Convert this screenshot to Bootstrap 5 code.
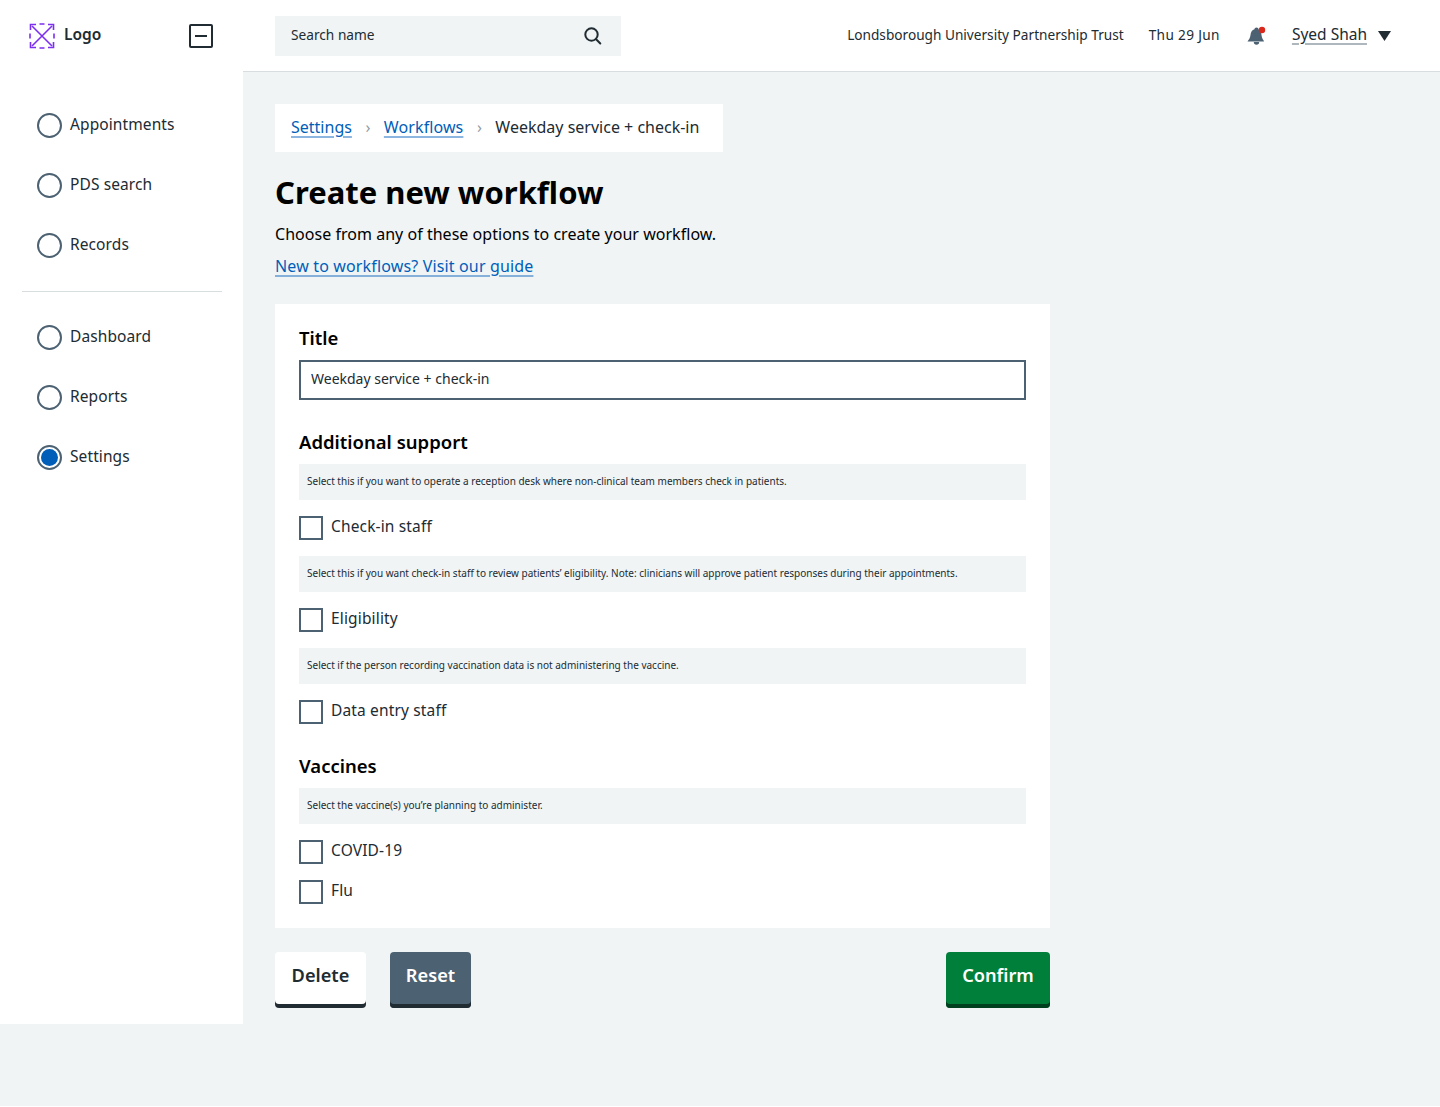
<!DOCTYPE html>
<html lang="en">
    <head>
        <meta charset="UTF-8">
        <meta name="viewport" content="width=device-width, initial-scale=1.0">
        <title>Create new workflow</title>
        <link href="https://cdn.jsdelivr.net/npm/bootstrap@5.3.0/dist/css/bootstrap.min.css" rel="stylesheet">
        <style>
            html { background: #fff; }
            body { font-family: "Noto Sans", "Open Sans", sans-serif; color: #212b32; background: #f0f4f5; min-height: 1106px; font-size: 16px; }
            a { color: #005eb8; text-decoration-color: rgba(0, 94, 184, .45); text-decoration-thickness: 2px; text-underline-offset: 3px; }
            .side-panel { width: 243px; height: 1024px; flex: none; background: #fff; }
            .brand-row { height: 72px; padding: 0 30px 0 29px; }
            .brand-name { font-size: 15.5px; font-weight: 600; margin-left: 1px; position: relative; top: -1px; }
            .collapse-btn { width: 24px; height: 24px; border: 2px solid #212b32; border-radius: 2px; padding: 0; background: none; }
            .collapse-btn::after { content: ""; display: block; width: 12px; height: 2px; background: #212b32; margin: 0 auto; }
            .side-nav { padding: 23px 0 0 37px; }
            .side-item { height: 60px; gap: 8px; color: #212b32; text-decoration: none; font-size: 15.5px; letter-spacing: .1px; }
            .side-item .dot { width: 25px; height: 25px; flex: none; border: 2px solid #4c6272; border-radius: 50%; padding: 2px; background-clip: content-box; }
            .side-item.on .dot { background-color: #005eb8; }
            .side-rule { margin: 16px 21px 0 22px; border-top: 1px solid #d8dde0; opacity: 1; }
            .side-group { padding: 15px 0 0 37px; }
            .main-area { flex: 1; min-width: 0; }
            .top-bar { height: 72px; background: #fff; border-bottom: 1px solid #d8dde0; padding: 0 49px 0 32px; font-size: 13.65px; }
            .search-box { width: 346px; height: 40px; background: #f0f4f5; padding: 0 18px 0 16px; font-size: 13.7px; }
            .trust-name { margin-right: 25px; }
            .today { margin-right: 27px; letter-spacing: .35px; }
            .bell { margin-right: 26px; }
            .user-name { color: #212b32; font-size: 15.5px; text-decoration-color: #aeb7bd; margin-right: 11px; position: relative; top: -1px; }
            .page-body { padding: 32px 0 0 32px; width: 807px; }
            .crumbs { width: 448px; height: 48px; background: #fff; padding: 0 16px; font-size: 16px; }
            .crumbs .breadcrumb { --bs-breadcrumb-margin-bottom: 0; --bs-breadcrumb-divider: "\203A"; --bs-breadcrumb-item-padding-x: 13.5px; --bs-breadcrumb-divider-color: #8f9ba4; --bs-breadcrumb-item-active-color: #212b32; height: 46px; align-items: center; flex-wrap: nowrap; white-space: nowrap; }
            .crumb-wide { letter-spacing: .1px; }
            h1.page-title { font-size: 31px; font-weight: 700; color: #000; margin: 20px 0 0; line-height: 40px; }
            .intro { margin: 10px 0 0; line-height: 24px; color: #000; font-size: 16px; letter-spacing: .03px; }
            .guide-link { display: block; width: max-content; margin-top: 8px; line-height: 24px; font-size: 16px; letter-spacing: .15px; margin-bottom: 26px; }
            .form-panel { background: #fff; padding: 24px; height: 624px; }
            .field-title { font-size: 18.5px; font-weight: 600; color: #000; line-height: 20px; margin: 0 0 12px; }
            .title-input { height: 40px; border: 2px solid #4c6272; border-radius: 0; font-size: 14px; padding: 0 10px 4px; color: #212b32; }
            .hint-box { background: #f0f4f5; height: 36px; padding: 0 8px 2px; font-size: 10px; display: flex; align-items: center; color: #212b32; }
            .check-row { display: flex; align-items: center; gap: 8px; margin: 0; padding: 0; min-height: 24px; font-size: 16px; }
            .check-row .form-check-input { width: 24px; height: 24px; margin: 0; flex: none; border: 2px solid #4c6272; border-radius: 0; }
            .check-row label { font-size: 15.5px; letter-spacing: .15px; position: relative; top: -1px; }
            .action-btn { height: 56px; border: 0; border-radius: 4px; font-size: 18.2px; font-weight: 600; padding: 0 15px 8px; }
            .btn-delete { width: 91px; background: #fff; color: #212b32; box-shadow: inset 0 -4px 0 #212b32; }
            .btn-reset { width: 81px; background: #4c6272; color: #fff; box-shadow: inset 0 -4px 0 #212b32; }
            .btn-confirm { width: 104px; background: #007f3b; color: #fff; box-shadow: inset 0 -4px 0 #00401e; }
        </style>
    </head>
    <body class="d-flex align-items-start">
        <aside class="side-panel">
            <div class="brand-row d-flex align-items-center justify-content-between">
                <div class="d-flex align-items-center gap-2">
                    <svg width="26" height="26" viewBox="0 0 26 26" fill="none" stroke="#7c2ff0" stroke-width="1.6">
                        <path d="M1 10.500v5M25 10.500v5M10.500 1h5M10.500 25h5"/>
                        <path d="M3 3l20 20M23 3L3 23"/>
                        <path d="M1.500 7V1.500H7M19 1.500h5.500V7M24.500 19v5.500H19M7 24.500H1.500V19"/>
                    </svg>
                    <span class="brand-name">Logo</span>
                </div>
                <button class="collapse-btn" type="button" aria-label="Collapse"></button>
            </div>
            <nav class="side-nav">
                <a class="side-item d-flex align-items-center" href="#"><span class="dot"></span>Appointments</a>
                <a class="side-item d-flex align-items-center" href="#"><span class="dot"></span>PDS search</a>
                <a class="side-item d-flex align-items-center" href="#"><span class="dot"></span>Records</a>
            </nav>
            <hr class="side-rule">
            <nav class="side-group">
                <a class="side-item d-flex align-items-center" href="#"><span class="dot"></span>Dashboard</a>
                <a class="side-item d-flex align-items-center" href="#"><span class="dot"></span>Reports</a>
                <a class="side-item on d-flex align-items-center" href="#"><span class="dot"></span>Settings</a>
            </nav>
        </aside>
        <div class="main-area">
            <header class="top-bar d-flex align-items-center">
                <div class="search-box d-flex align-items-center justify-content-between">
                    <span>Search name</span>
                    <svg width="20" height="20" viewBox="0 0 20 20" fill="none" stroke="#212b32" stroke-width="2" stroke-linecap="round">
                        <circle cx="8.500" cy="8.500" r="6.200"/><path d="M13.100 13.300l4.200 4.200"/>
                    </svg>
                </div>
                <div class="ms-auto d-flex align-items-center">
                    <span class="trust-name">Londsborough University Partnership Trust</span>
                    <span class="today">Thu 29 Jun</span>
                    <svg class="bell" width="19" height="20" viewBox="0 0 19 20">
                        <path fill="#4c6272" d="M9.500 1.500c1.200 0 2 .8 2 1.800 2 .9 2.800 3 3 5.700.2 2.300 1 4 2 5.200l.5 1.300H.5l.8-1.300C2.500 13 3.200 11.300 3.500 9 3.800 6.300 5 4 7.500 3.300c0-1 .8-1.800 2-1.800zM6.800 16h5.400a2.700 2.700 0 0 1-5.400 0z"/>
                        <circle cx="15" cy="4" r="3.200" fill="#da291c"/>
                    </svg>
                    <a class="user-name" href="#">Syed Shah</a>
                    <svg width="13" height="10" viewBox="0 0 13 10"><path fill="#212b32" d="M0 0h13L6.500 10z"/></svg>
                </div>
            </header>
            <main class="page-body">
                <nav class="crumbs" aria-label="breadcrumb">
                    <ol class="breadcrumb">
                        <li class="breadcrumb-item"><a href="#">Settings</a></li>
                        <li class="breadcrumb-item"><a class="crumb-wide" href="#">Workflows</a></li>
                        <li class="breadcrumb-item active" aria-current="page">Weekday service + check-in</li>
                    </ol>
                </nav>
                <h1 class="page-title">Create new workflow</h1>
                <p class="intro">Choose from any of these options to create your workflow.</p>
                <a class="guide-link" href="#">New to workflows? Visit our guide</a>
                <form class="form-panel">
                    <label class="field-title d-block" for="wfTitle">Title</label>
                    <input class="form-control title-input" id="wfTitle" type="text" value="Weekday service + check-in">
                    <h2 class="field-title mt-4 mb-2 pt-2 pb-1">Additional support</h2>
                    <div class="hint-box">Select this if you want to operate a reception desk where non-clinical team members check in patients.</div>
                    <div class="check-row form-check my-3"><input class="form-check-input" type="checkbox" id="c1"><label for="c1">Check-in staff</label></div>
                    <div class="hint-box">Select this if you want check-in staff to review patients’ eligibility. Note: clinicians will approve patient responses during their appointments.</div>
                    <div class="check-row form-check my-3"><input class="form-check-input" type="checkbox" id="c2"><label for="c2">Eligibility</label></div>
                    <div class="hint-box">Select if the person recording vaccination data is not administering the vaccine.</div>
                    <div class="check-row form-check mt-3"><input class="form-check-input" type="checkbox" id="c3"><label for="c3">Data entry staff</label></div>
                    <h2 class="field-title mt-4 mb-2 pt-2 pb-1">Vaccines</h2>
                    <div class="hint-box">Select the vaccine(s) you’re planning to administer.</div>
                    <div class="check-row form-check mt-3"><input class="form-check-input" type="checkbox" id="c4"><label for="c4">COVID-19</label></div>
                    <div class="check-row form-check mt-3"><input class="form-check-input" type="checkbox" id="c5"><label for="c5">Flu</label></div>
                </form>
                <div class="d-flex gap-4 mt-4">
                    <button class="btn action-btn btn-delete" type="button">Delete</button>
                    <button class="btn action-btn btn-reset" type="button">Reset</button>
                    <button class="btn action-btn btn-confirm ms-auto" type="button">Confirm</button>
                </div>
            </main>
        </div>
    </body>
</html>
